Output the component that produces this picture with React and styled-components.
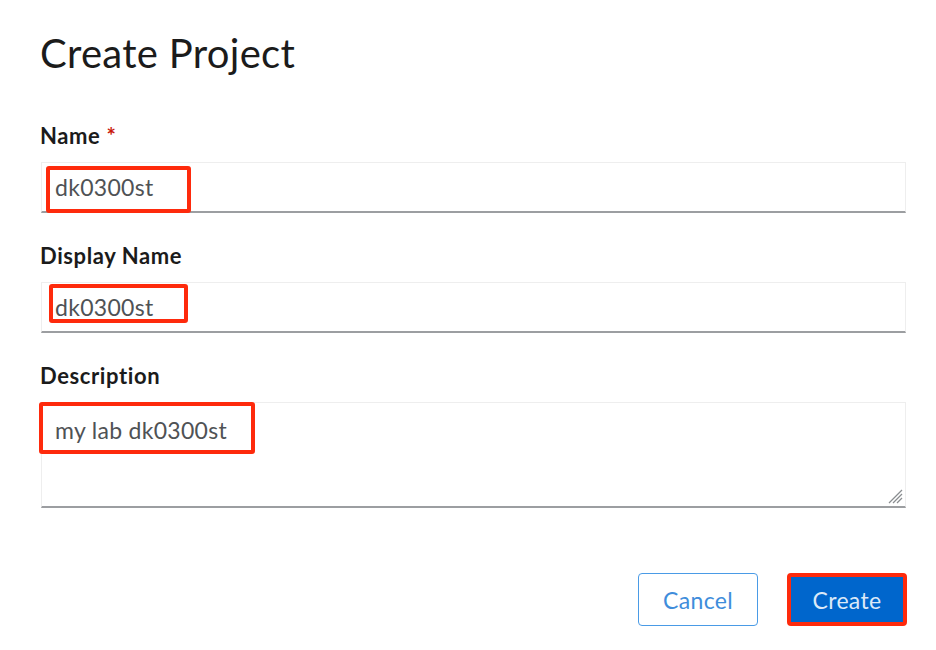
import styled, { createGlobalStyle } from "styled-components";

const Global = createGlobalStyle`
    html, body {
        margin: 0;
        padding: 0;
        background: #fff;
    }
    body {
        font-family: Lato, "Open Sans", "Liberation Sans", sans-serif;
        color: #151515;
    }
`

const Page = styled.div`
    width: 936px;
    height: 650px;
    box-sizing: border-box;
    padding: 30px 30px 0 40px;
    overflow: hidden;
`

const Title = styled.h1`
    margin: 0;
    font-size: 40px;
    line-height: 46px;
    letter-spacing: 0.3px;
    font-weight: 400;
    color: #1b1b1b;
`

const Form = styled.form`
    display: flex;
    flex-direction: column;
    gap: 30px;
    margin-top: 47px;
`

const Field = styled.div`
    display: flex;
    flex-direction: column;
`

const Label = styled.label`
    font-size: 22px;
    line-height: 26px;
    letter-spacing: 0.6px;
    font-weight: 700;
    color: #1b1b1b;
    margin-bottom: 13px;
`

const Required = styled.span`
    color: #c9190b;
    margin-left: 6px;
`

const Box = styled.div`
    position: relative;
    margin-left: 1px;
    height: ${p => p.$h}px;
    border: 1px solid #eeeeee;
    border-bottom: 2px solid #9c9ea1;
    box-sizing: border-box;
    background: #fff;
`

const TextInput = styled.input`
    width: 100%;
    height: 100%;
    box-sizing: border-box;
    border: 0;
    outline: none;
    padding: 0 13px;
    font-family: inherit;
    font-size: 23px;
    letter-spacing: 0.3px;
    color: #4f5255;
    background: transparent;
`

const TextArea = styled.textarea`
    width: 100%;
    height: 100%;
    box-sizing: border-box;
    border: 0;
    outline: none;
    resize: none;
    padding: 12px 13px;
    font-family: inherit;
    font-size: 23px;
    letter-spacing: 0.3px;
    line-height: 30px;
    color: #4f5255;
    background: transparent;
`

const Mark = styled.div`
    position: absolute;
    left: ${p => p.$x}px;
    top: ${p => p.$y}px;
    width: ${p => p.$w}px;
    height: ${p => p.$h}px;
    border: 4px solid #fe2a0c;
    border-radius: 3px;
    box-sizing: border-box;
    pointer-events: none;
`

const Grip = styled.svg`
    position: absolute;
    right: 2px;
    bottom: 2px;
`

const Actions = styled.div`
    display: flex;
    justify-content: flex-end;
    gap: 29px;
    margin-top: 35px;
    margin-right: -1px;
`

const Button = styled.button`
    width: 120px;
    height: 53px;
    box-sizing: border-box;
    border-radius: 4px;
    font-family: inherit;
    font-size: 23px;
    letter-spacing: 0.3px;
    cursor: pointer;
    border: ${p => p.$primary ? "4px solid #fe2a0c" : "1.5px solid #4a9be6"};
    background: ${p => p.$primary ? "#0066cc" : "#fff"};
    color: ${p => p.$primary ? "#dbe9f8" : "#3f8ddb"};
`

function App() {
    return (
        <Page>
            <Global />
            <Title>Create Project</Title>
            <Form>
                <Field>
                    <Label>Name<Required>*</Required></Label>
                    <Box $h={51}>
                        <TextInput defaultValue="dk0300st" readOnly />
                        <Mark $x={4} $y={3} $w={145} $h={47} />
                    </Box>
                </Field>
                <Field>
                    <Label>Display Name</Label>
                    <Box $h={51}>
                        <TextInput defaultValue="dk0300st" readOnly />
                        <Mark $x={7} $y={1} $w={139} $h={39} />
                    </Box>
                </Field>
                <Field>
                    <Label>Description</Label>
                    <Box $h={106}>
                        <TextArea defaultValue="my lab dk0300st" readOnly />
                        <Mark $x={-3} $y={-1} $w={216} $h={52} />
                        <Grip width="16" height="16" viewBox="0 0 16 16">
                            <g stroke="#8a8d90" strokeWidth="1.3">
                                <line x1="15" y1="2" x2="2" y2="15" />
                                <line x1="15" y1="6" x2="6" y2="15" />
                                <line x1="15" y1="10" x2="10" y2="15" />
                            </g>
                        </Grip>
                    </Box>
                </Field>
                <Actions>
                    <Button type="button">Cancel</Button>
                    <Button type="button" $primary>Create</Button>
                </Actions>
            </Form>
        </Page>
    )
}

export default App;
